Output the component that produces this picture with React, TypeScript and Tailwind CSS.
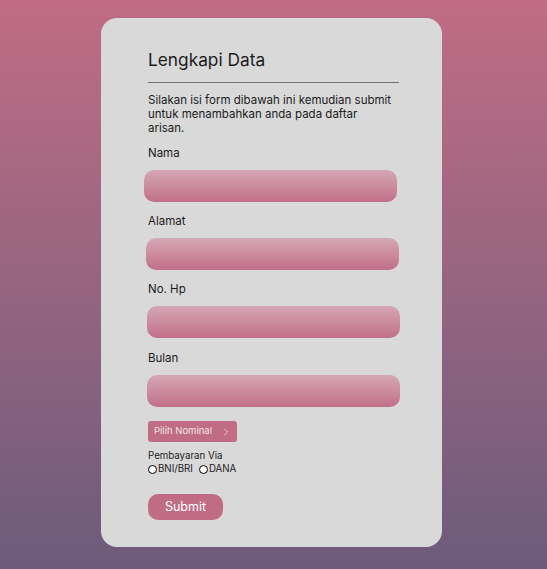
import { ChevronRight } from "lucide-react"

const fields = [
  { label: "Nama", shift: "-ml-[4px]", gap: "" },
  { label: "Alamat", shift: "-ml-[2px]", gap: "mt-[11px]" },
  { label: "No. Hp", shift: "-ml-[1px]", gap: "mt-[11px]" },
  { label: "Bulan", shift: "-ml-[1px]", gap: "mt-[12px]" },
]

export default function App() {
  return (
    <div
      className="min-h-[569px] w-full bg-gradient-to-b from-[#c06c84] to-[#6c5b7b] pt-[18px] pb-[22px] pl-[101px] text-[#1b1b1b]"
      style={{ fontFamily: "Inter, 'Noto Sans', sans-serif" }}
    >
      <div className="w-[341px] h-[529px] rounded-[16px] bg-[#d9d9d9] pl-[47px] pr-[43px] pt-[30px]">
        <h1 className="text-[17.3px] leading-[24px] font-normal">Lengkapi Data</h1>
        <div className="mt-[10px] h-px w-[251px] bg-[#707070]" />

        <p className="mt-[10px] text-[11.5px] leading-[14px] w-[247px]">
          Silakan isi form dibawah ini kemudian submit untuk menambahkan anda pada daftar arisan.
        </p>

        <div className="mt-[10px] flex flex-col">
          {fields.map((f) => (
            <div key={f.label} className={f.gap}>
              <label className="block text-[11.5px] leading-[16px]">{f.label}</label>
              <div
                className={`mt-[9px] h-[32px] w-[253px] rounded-[10px] bg-gradient-to-b from-[#d4a7b4] to-[#c1708a] ${f.shift}`}
              />
            </div>
          ))}
        </div>

        <button className="mt-[14px] flex h-[21px] w-[89px] items-center justify-between rounded-[3px] bg-[#c06c84] pl-[6px] pr-[5px] text-[9.5px] text-[#f3e4e9]">
          Pilih Nominal
          <ChevronRight className="h-[12px] w-[12px] text-white" strokeWidth={1.3} />
        </button>

        <div className="mt-[8px] text-[9.7px] leading-[12px]">Pembayaran Via</div>
        <div className="mt-[1px] flex items-center text-[9.7px] leading-[12px]">
          <span className="inline-block h-[9px] w-[9px] rounded-full border border-black bg-white" />
          <span className="ml-[1px]">BNI/BRI</span>
          <span className="ml-[6px] inline-block h-[9px] w-[9px] rounded-full border border-black bg-white" />
          <span className="ml-[1px]">DANA</span>
        </div>

        <button className="mt-[19px] h-[26px] w-[75px] rounded-[10px] bg-[#c06c84] text-[12.5px] text-white">
          Submit
        </button>
      </div>
    </div>
  )
}
